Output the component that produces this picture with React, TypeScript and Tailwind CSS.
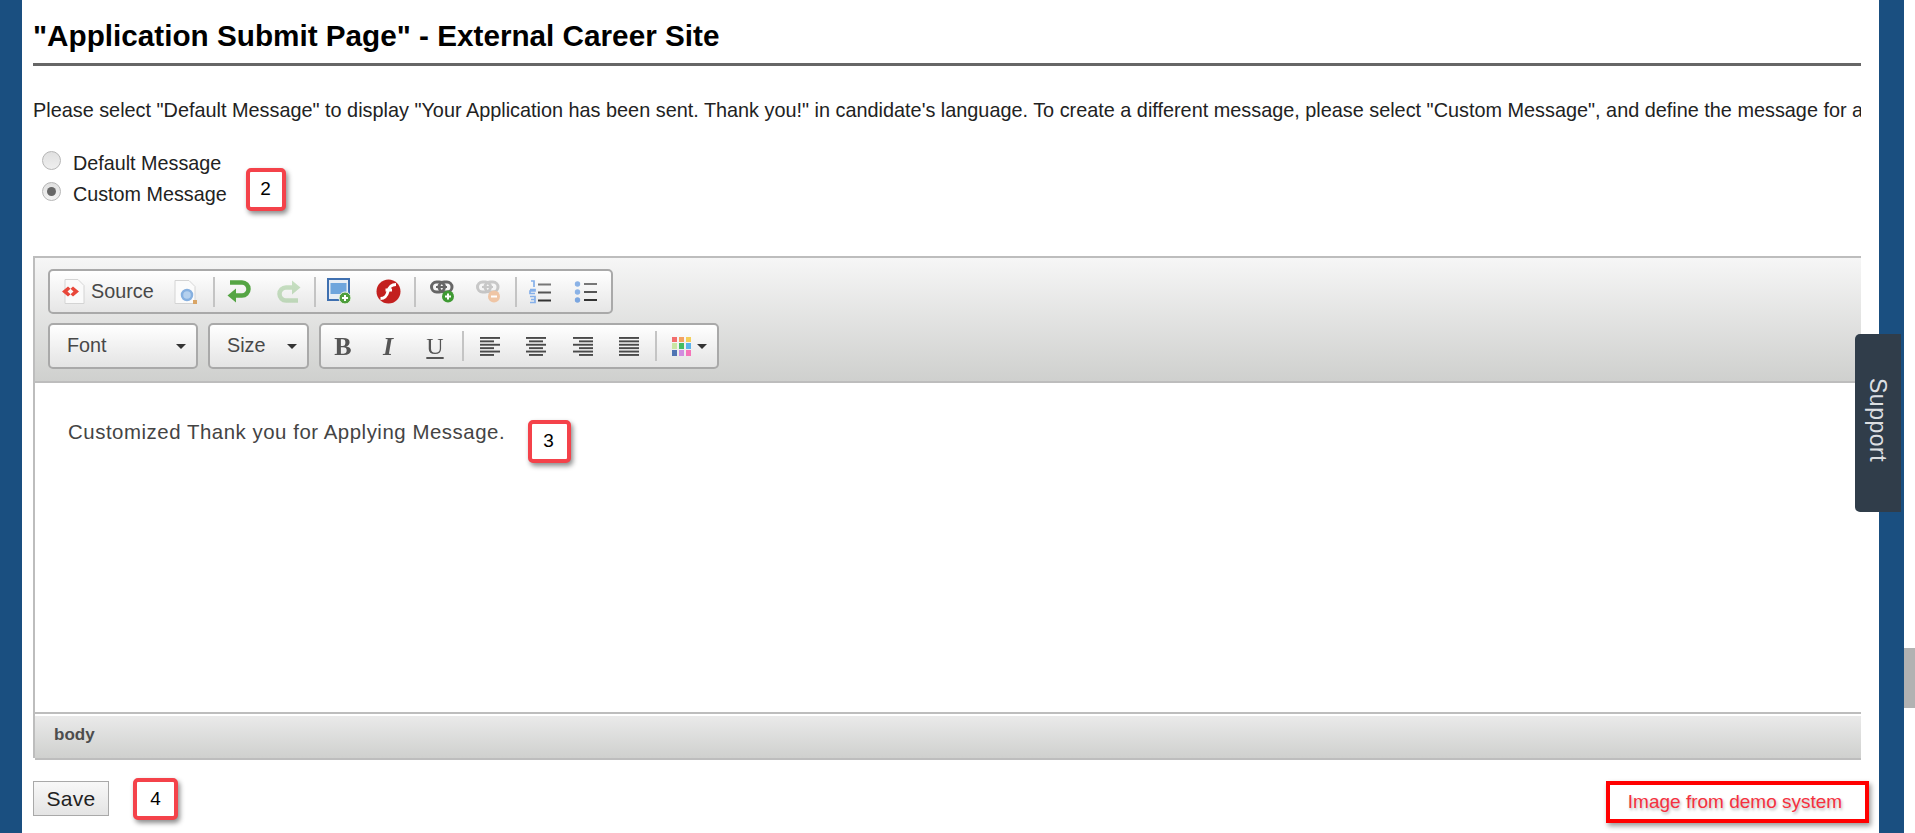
import type { ReactNode } from 'react'

const font = 'font-["Liberation_Sans",Arial,sans-serif]'

function Sep() {
  return <div className="w-[2px] h-[30px] bg-[#c4c4c4] mx-[3px] shrink-0" />
}

function Btn({ w = 46, className = '', children }: { w?: number; className?: string; children: ReactNode }) {
  return (
    <div className={`flex items-center justify-center h-full shrink-0 ${className}`} style={{ width: w }}>
      {children}
    </div>
  )
}

function Combo({ label, width }: { label: string; width: string }) {
  return (
    <div className={`${width} h-[46px] flex items-center justify-between pl-[17px] pr-[10px] border-2 border-[#a9a9a9] rounded-[5px] bg-linear-to-b from-white to-[#e4e4e4] shrink-0`}>
      <span className="text-[19.800px] text-[#484848]">{label}</span>
      <Caret />
    </div>
  )
}

function Caret() {
  return <div className="w-0 h-0 border-x-[5px] border-x-transparent border-t-[5px] border-t-[#333]" />
}

function SourceIcon() {
  return (
    <svg width="27" height="27" viewBox="0 0 27 27" className="blur-[0.5px]">
      <path d="M5 1.5h13l6 6v18H5z" fill="#fafafa" stroke="#d4d4d4" />
      <path d="M8 8.5l-6 5 6 5 2.500-2.200-3-2.800 3-2.800z" fill="#e8473a" />
      <path d="M13 8.5l6 5-6 5-2.500-2.200 3-2.800-3-2.800z" fill="#e8473a" />
    </svg>
  )
}

function PreviewIcon() {
  return (
    <svg width="25" height="26" viewBox="0 0 25 26" className="blur-[0.5px]">
      <path d="M2 1.5h14l6 6v17H2z" fill="#fbfbfb" stroke="#d4d4d4" />
      <circle cx="14" cy="16" r="5" fill="#b4d0ee" stroke="#86b0e0" strokeWidth="2.500" />
      <rect x="20" y="21" width="4" height="4" fill="#d9a566" />
    </svg>
  )
}

function UndoIcon({ faded }: { faded?: boolean }) {
  return (
    <svg width="25" height="25" viewBox="0 0 25 25" className={`blur-[0.5px] ${faded ? 'opacity-30 rotate-180' : ''}`}>
      <path d="M4 3.500h12a6.500 6.500 0 0 1 0 13H8" fill="none" stroke="#55a544" strokeWidth="4.500" />
      <path d="M10 9.500L1.500 16.500 10 23.500z" fill="#55a544" />
    </svg>
  )
}

function ImageIcon() {
  return (
    <svg width="25" height="27" viewBox="0 0 25 27" className="blur-[0.5px]">
      <rect x="1" y="1" width="21" height="21" fill="#e8edf4" stroke="#3f70b0" strokeWidth="2" />
      <rect x="3.500" y="5" width="16" height="11" fill="#6fa5dc" />
      <circle cx="18" cy="20" r="6" fill="#4e9e3c" stroke="#eef5ea" />
      <path d="M15 20h6M18 17v6" stroke="#fff" strokeWidth="2" />
    </svg>
  )
}

function FlashIcon() {
  return (
    <svg width="25" height="25" viewBox="0 0 25 25" className="blur-[0.5px]">
      <circle cx="12.500" cy="12.500" r="12" fill="#c3201f" />
      <path d="M20 5.500c-5.500 0-7 3-8 7s-2.500 7-7.500 7M9.500 11h6.500" fill="none" stroke="#fff" strokeWidth="3" />
    </svg>
  )
}

function LinkIcon({ faded }: { faded?: boolean }) {
  return (
    <svg width="25" height="24" viewBox="0 0 25 24" className="blur-[0.5px]">
      <g opacity={faded ? 0.32 : 1}>
        <rect x="1.500" y="2" width="13" height="10" rx="5" fill="none" stroke="#666" strokeWidth="3" />
        <rect x="9" y="2" width="13" height="10" rx="5" fill="none" stroke="#666" strokeWidth="3" />
        <path d="M6 7h11" stroke="#666" strokeWidth="2" />
      </g>
      {faded ? (
        <>
          <circle cx="18" cy="16.500" r="6" fill="#efc5a5" />
          <path d="M15 16.500h6" stroke="#fff" strokeWidth="2" />
        </>
      ) : (
        <>
          <circle cx="18" cy="16.500" r="6" fill="#3f9a33" />
          <path d="M15 16.500h6M18 13.500v6" stroke="#fff" strokeWidth="2" />
        </>
      )}
    </svg>
  )
}

function OlIcon() {
  return (
    <svg width="23" height="24" viewBox="0 0 23 24" className="blur-[0.4px]">
      <path d="M2 1h3v6M1 9.500h5v1.500H1v2.500h5M1 16.500h5v6H1M2 19.500h4" fill="none" stroke="#85b0ea" strokeWidth="1.700" />
      <path d="M9 4.500h13" stroke="#777" strokeWidth="2" />
      <path d="M9 12.500h13" stroke="#555" strokeWidth="2" />
      <path d="M9 20.500h13" stroke="#333" strokeWidth="2" />
    </svg>
  )
}

function UlIcon() {
  return (
    <svg width="24" height="24" viewBox="0 0 24 24" className="blur-[0.4px]">
      <circle cx="3.500" cy="4" r="2.700" fill="#8ab2e6" />
      <circle cx="3.500" cy="12" r="2.700" fill="#8ab2e6" />
      <circle cx="3.500" cy="20" r="2.700" fill="#7ba6e0" />
      <path d="M10 4h13" stroke="#777" strokeWidth="2" />
      <path d="M10 12h13" stroke="#555" strokeWidth="2" />
      <path d="M10 20h13" stroke="#333" strokeWidth="2" />
    </svg>
  )
}

function AlignIcon({ kind }: { kind: 'left' | 'center' | 'right' | 'justify' }) {
  const rows = [0, 1, 2, 3, 4, 5]
  const long = [20, 14, 20, 14, 20, 14]
  return (
    <svg width="20" height="19" viewBox="0 0 20 19" className="blur-[0.3px]">
      {rows.map(i => {
        const w = kind === 'justify' ? 20 : long[i]
        const x = kind === 'left' || kind === 'justify' ? 0 : kind === 'right' ? 20 - w : (20 - w) / 2
        return <rect key={i} x={x} y={i * 3.4} width={w} height="1.900" fill="#4a4a4a" />
      })}
    </svg>
  )
}

function ColorIcon() {
  const colors = ['#f26d6d', '#f4a261', '#f2cf5b', '#c9e5a3', '#44bd63', '#5cb3ec', '#4f74b3', '#d18de0', '#f574b9']
  return (
    <div className="grid grid-cols-3 gap-[1.500px] w-[19px] h-[19px] blur-[0.3px]">
      {colors.map(c => (
        <div key={c} style={{ backgroundColor: c }} />
      ))}
    </div>
  )
}

function Note({ n, className }: { n: string; className: string }) {
  return (
    <div className={`absolute flex items-center justify-center bg-white border-[4px] border-[#f4424a] rounded-[5px] shadow-[2px_3px_5px_rgba(0,0,0,0.45)] text-[19px] text-black ${className}`}>
      {n}
    </div>
  )
}

export default function App() {
  return (
    <div className={`${font} relative flex w-[1915px] h-[833px] overflow-hidden bg-white`}>
      <div className="w-[22px] bg-[#1a4f80] shrink-0" />

      <main className="w-[1857px] shrink-0 pl-[11px] pr-[18px]">
        <h1 className="pt-[18px] pb-[10px] text-[29.700px] leading-[35px] font-bold text-black border-b-[3px] border-[#666] whitespace-nowrap">
          "Application Submit Page" - External Career Site
        </h1>
        <p className="mt-[32px] text-[19.850px] leading-[24px] text-[#222] whitespace-nowrap overflow-hidden">
          Please select "Default Message" to display "Your Application has been sent. Thank you!" in candidate's language. To create a different message, please select "Custom Message", and define the message for all languages in use.
        </p>

        <div className="mt-[26px] pl-[9px] text-[19.750px] text-[#222]">
          <label className="flex items-center h-[31px]">
            <span className="w-[19px] h-[19px] rounded-full border border-[#b5b5b5] bg-linear-to-b from-[#e0e0e0] to-[#efefef] -mt-[7px]" />
            <span className="ml-[12px] mt-[1px]">Default Message</span>
          </label>
          <label className="flex items-center h-[31px]">
            <span className="w-[19px] h-[19px] rounded-full border border-[#b5b5b5] bg-linear-to-b from-[#e0e0e0] to-[#f2f2f2] -mt-[7px] flex items-center justify-center">
              <span className="w-[9px] h-[9px] rounded-full bg-[#666]" />
            </span>
            <span className="ml-[12px] mt-[1px]">Custom Message</span>
          </label>
        </div>

        <div className="mt-[46px] h-[502px] border-l-2 border-[#bdbdbd] flex flex-col">
          <div className="h-[125px] border-t-2 border-[#bdbdbd] bg-linear-to-b from-[#f6f6f6] to-[#cfd0ce] pl-[13px] pt-[11px] shrink-0">
            <div className="w-[565px] h-[45px] flex items-center pl-[2px] border-2 border-[#a9a9a9] rounded-[5px] bg-linear-to-b from-white to-[#e6e6e6]">
              <div className="w-[108px] flex items-center pl-[8px] shrink-0">
                <SourceIcon />
                <span className="ml-[4px] text-[19.800px] text-[#484848]">Source</span>
              </div>
              <Btn w={50}><PreviewIcon /></Btn>
              <Sep />
              <Btn w={46} className="pr-[6px]"><UndoIcon /></Btn>
              <Btn w={47} className="pl-[4px]"><UndoIcon faded /></Btn>
              <Sep />
              <Btn w={47} className="pr-[6px]"><ImageIcon /></Btn>
              <Btn w={45}><FlashIcon /></Btn>
              <Sep />
              <Btn w={46}><LinkIcon /></Btn>
              <Btn w={47}><LinkIcon faded /></Btn>
              <Sep />
              <Btn w={46} className="pr-[5px]"><OlIcon /></Btn>
              <Btn w={47} className="pr-[7px]"><UlIcon /></Btn>
            </div>

            <div className="mt-[9px] flex items-center">
              <Combo label="Font" width="w-[150px]" />
              <div className="w-[10px] shrink-0" />
              <Combo label="Size" width="w-[101px]" />
              <div className="w-[10px] shrink-0" />
              <div className="w-[400px] h-[46px] flex items-center border-2 border-[#a9a9a9] rounded-[5px] bg-linear-to-b from-white to-[#e4e4e4] shrink-0">
                <Btn w={44}><span className="font-['Liberation_Serif',serif] font-bold text-[26px] text-[#555] blur-[0.3px]">B</span></Btn>
                <Btn w={46}><span className="font-['Liberation_Serif',serif] font-bold italic text-[26px] text-[#555] blur-[0.3px]">I</span></Btn>
                <Btn w={48}><span className="font-['Liberation_Serif',serif] text-[24px] text-[#555] underline underline-offset-[3px] blur-[0.3px]">U</span></Btn>
                <Sep />
                <Btn w={46}><AlignIcon kind="left" /></Btn>
                <Btn w={46}><AlignIcon kind="center" /></Btn>
                <Btn w={47}><AlignIcon kind="right" /></Btn>
                <Btn w={46}><AlignIcon kind="justify" /></Btn>
                <Sep />
                <div className="flex items-center gap-[6px] pl-[12px]">
                  <ColorIcon />
                  <Caret />
                </div>
              </div>
            </div>
          </div>

          <div className="flex-1 border-t-2 border-[#bdbdbd] px-[33px] pt-[37px] text-[20.400px] leading-[24px] tracking-[0.54px] text-[#444]">
            Customized Thank you for Applying Message.
          </div>

          <div className="h-[46px] border-t-2 border-[#bdbdbd] shrink-0">
            <div className="h-full mt-[2px] border-b-2 border-[#bdbdbd] bg-linear-to-b from-[#eaeaea] to-[#cfd0ce] pl-[19px] flex items-center">
              <span className="text-[17px] font-bold text-[#4d4d4d] -mt-[4px]">body</span>
            </div>
          </div>
        </div>

        <button className="mt-[23px] w-[76px] h-[35px] border border-[#a9a9a9] bg-linear-to-b from-[#f8f8f8] to-[#e4e4e4] text-[21px] tracking-[0.3px] text-[#222]">
          Save
        </button>
      </main>

      <div className="w-[25px] bg-[#1a4f80] shrink-0" />
      <div className="w-[11px] relative shrink-0">
        <div className="absolute top-[648px] left-0 w-[11px] h-[60px] bg-[#b2b2b2]" />
      </div>

      <Note n="2" className="left-[246px] top-[168px] w-[40px] h-[43px] pr-[1px]" />
      <Note n="3" className="left-[528px] top-[420px] w-[43px] h-[43px] pr-[2px]" />
      <Note n="4" className="left-[133px] top-[778px] w-[45px] h-[42px]" />

      <div className="absolute left-[1606px] top-[781px] w-[263px] h-[42px] flex items-center justify-center border-[4px] border-[#f00] shadow-[2px_3px_5px_rgba(0,0,0,0.4)] bg-white pr-[5px] text-[19px] text-[#f5303e] [text-shadow:1px_2px_3px_rgba(0,0,0,0.3)]">
        Image from demo system
      </div>

      <div className="absolute left-[1855px] top-[334px] w-[46px] h-[178px] rounded-l-[5px] bg-[#303d4a] flex items-center justify-center">
        <span className="[writing-mode:vertical-rl] text-[23px] tracking-[0.5px] text-[#dcdfe2] -mt-[6px]">Support</span>
      </div>
    </div>
  )
}
